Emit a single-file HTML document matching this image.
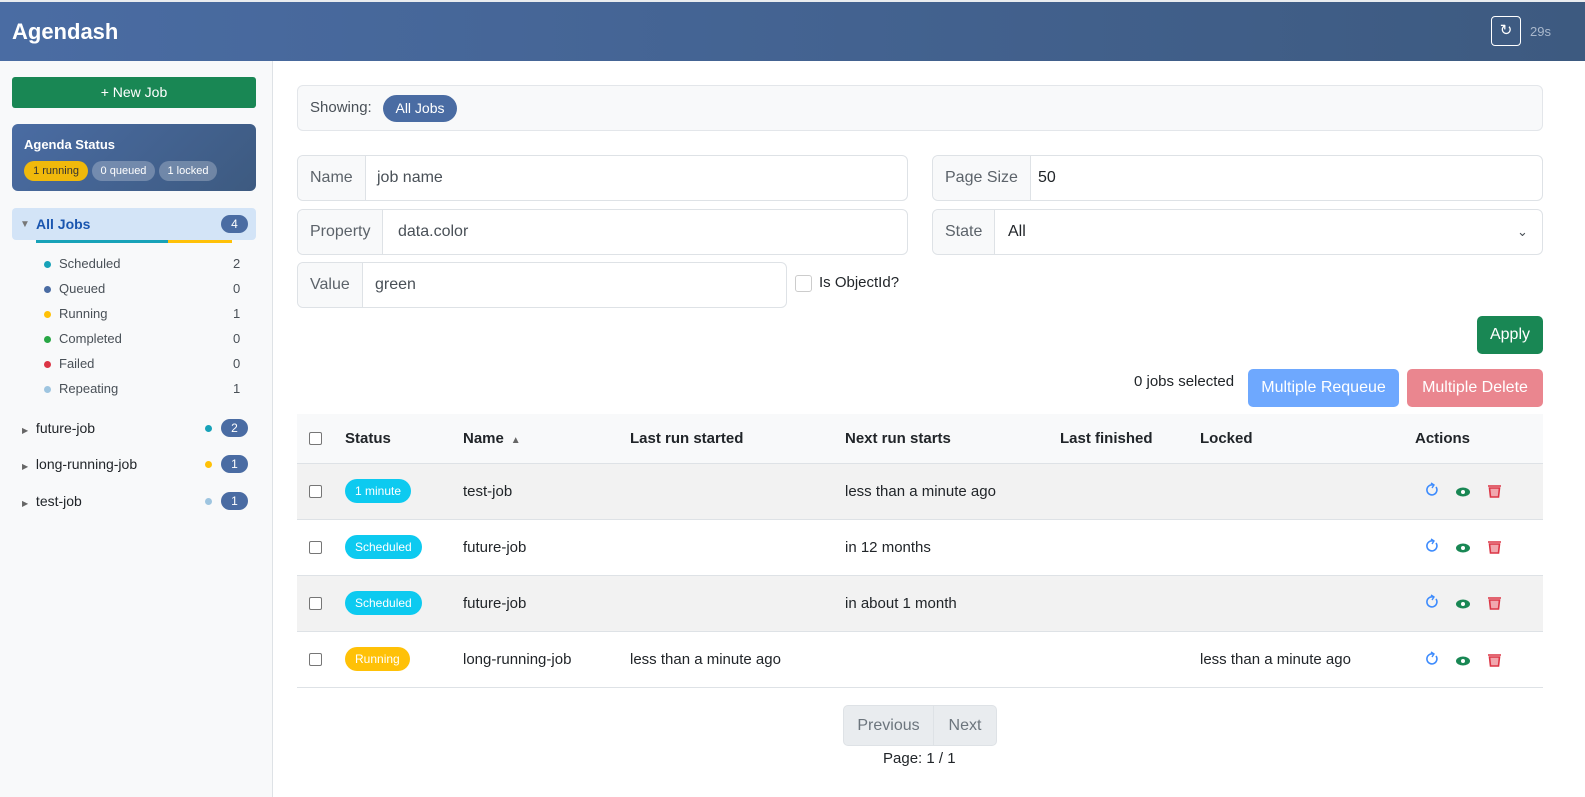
<!DOCTYPE html>
<html><head><meta charset="utf-8"><style>
*{box-sizing:border-box;margin:0;padding:0}
body{width:1585px;height:797px;overflow:hidden;font-family:"Liberation Sans",sans-serif;color:#212529;background:#fff;position:relative}
.hdr{position:absolute;left:0;top:2px;width:1585px;height:59px;background:linear-gradient(90deg,#4a6ca3,#3d5a80);border-top:0}
.top{position:absolute;left:0;top:0;width:1585px;height:2px;background:#e9ecef}
.hdr h1{position:absolute;left:12px;top:17px;color:#fff;font-size:22px;font-weight:bold}
.rb{position:absolute;left:1491px;top:14px;width:30px;height:30px;border:1px solid #fff;border-radius:4px;color:#fff;text-align:center;line-height:28px;font-size:15px}
.sec{position:absolute;left:1530px;top:22px;color:#aab8cc;font-size:13px}
.side{position:absolute;left:0;top:61px;width:273px;height:736px;background:#f8f9fa;border-right:1px solid #dee2e6}
.nj{position:absolute;left:12px;top:16px;width:244px;height:31px;background:#198754;border-radius:3px;color:#fff;text-align:center;line-height:31px;font-size:14px}
.as{position:absolute;left:12px;top:63px;width:244px;height:67px;border-radius:6px;background:linear-gradient(135deg,#4a6ca3,#3d5a80);color:#fff}
.as b{position:absolute;left:12px;top:13px;font-size:13px}
.pill{position:absolute;top:37px;height:20px;border-radius:10px;font-size:11px;line-height:20px;text-align:center;color:#fff;background:rgba(255,255,255,.25)}
.aj{position:absolute;left:12px;top:147px;width:244px;height:32px;background:#d3e4f7;border-radius:4px}
.aj span{position:absolute;left:24px;top:8px;color:#1a56b0;font-weight:bold;font-size:14px}
.cnt{position:absolute;height:18px;border-radius:9px;background:#4a6ca3;color:#fff;font-size:12px;line-height:18px;text-align:center;width:27px}
.sub{position:absolute;left:44px;font-size:13px;color:#495057}
.sub i{position:absolute;left:0;top:5px;width:7px;height:7px;border-radius:50%}
.sub span{position:absolute;left:15px;top:0;white-space:nowrap}
.sub em{position:absolute;left:189px;font-style:normal}
.jl{position:absolute;left:22px;font-size:14px;color:#212529}
.main{position:absolute;left:297px}
.show{position:absolute;left:297px;top:85px;width:1246px;height:46px;background:#f8f9fa;border:1px solid #e3e6ea;border-radius:6px;font-size:15px;color:#495057}
.ig{position:absolute;height:46px;border:1px solid #dee2e6;border-radius:6px;font-size:16px;background:#fff}
.ig .l{position:absolute;left:0;top:0;height:44px;background:#f8f9fa;border-right:1px solid #dee2e6;color:#5c636a;padding:0 12px;line-height:44px;border-radius:6px 0 0 6px}
.ig .v{position:absolute;top:0;line-height:44px;color:#495057}
.btn{position:absolute;height:38px;border-radius:5px;color:#fff;font-size:16px;line-height:38px;text-align:center}
table{position:absolute;left:297px;top:414px;width:1246px;border-collapse:collapse;font-size:15px}
th{text-align:left;height:49px;font-weight:bold;background:#f8f9fa;border-bottom:1px solid #dee2e6}
td{height:56px;border-bottom:1px solid #dee2e6}
tr.g td{background:#f2f2f2}
.cb{display:inline-block;width:13px;height:13px;border:1px solid #767676;border-radius:2px;background:#fff;vertical-align:middle}
.bd{display:inline-block;height:24px;border-radius:12px;font-size:12px;line-height:24px;padding:0 10px;color:#fff;background:#0dcaf0}
.pg{position:absolute;top:705px;height:41px;background:#e9ecef;border:1px solid #dee2e6;color:#6c757d;font-size:16px;line-height:39px;text-align:center}
</style></head><body>
<div class="top"></div>
<div class="hdr"><h1>Agendash</h1><div class="rb">↻</div><div class="sec">29s</div></div>
<div class="side">
<div class="nj">+ New Job</div>
<div class="as"><b>Agenda Status</b>
<div class="pill" style="left:12px;width:64px;background:#f0b90b;color:#333">1 running</div>
<div class="pill" style="left:80px;width:63px">0 queued</div>
<div class="pill" style="left:147px;width:58px">1 locked</div></div>
<div class="aj"><span style="left:8px;color:#777;font-size:10px;top:11px">▼</span><span>All Jobs</span><div class="cnt" style="left:209px;top:7px">4</div></div>
<div style="position:absolute;left:36px;top:179px;width:132px;height:3px;background:#17a2b8"></div>
<div style="position:absolute;left:168px;top:179px;width:64px;height:3px;background:#ffc107"></div>
<div class="sub" style="top:195px"><i style="background:#17a2b8"></i><span>Scheduled</span><em>2</em></div>
<div class="sub" style="top:220px"><i style="background:#4a6ca3"></i><span>Queued</span><em>0</em></div>
<div class="sub" style="top:245px"><i style="background:#ffc107"></i><span>Running</span><em>1</em></div>
<div class="sub" style="top:270px"><i style="background:#28a745"></i><span>Completed</span><em>0</em></div>
<div class="sub" style="top:295px"><i style="background:#dc3545"></i><span>Failed</span><em>0</em></div>
<div class="sub" style="top:320px"><i style="background:#9ec5e0"></i><span>Repeating</span><em>1</em></div>
<div class="jl" style="top:359px"><span style="font-size:8px;color:#666">▶</span>&nbsp; future-job</div>
<i style="position:absolute;left:205px;top:364px;width:7px;height:7px;border-radius:50%;background:#17a2b8"></i><div class="cnt" style="left:221px;top:358px">2</div>
<div class="jl" style="top:395px"><span style="font-size:8px;color:#666">▶</span>&nbsp; long-running-job</div>
<i style="position:absolute;left:205px;top:400px;width:7px;height:7px;border-radius:50%;background:#ffc107"></i><div class="cnt" style="left:221px;top:394px">1</div>
<div class="jl" style="top:432px"><span style="font-size:8px;color:#666">▶</span>&nbsp; test-job</div>
<i style="position:absolute;left:205px;top:437px;width:7px;height:7px;border-radius:50%;background:#9ec5e0"></i><div class="cnt" style="left:221px;top:431px">1</div>
</div>
<div class="show"><span style="position:absolute;left:12px;top:13px">Showing:</span><span style="position:absolute;left:85px;top:9px;height:27px;width:74px;border-radius:14px;background:#4a6ca3;color:#fff;font-size:14px;line-height:27px;text-align:center">All Jobs</span></div>
<div class="ig" style="left:297px;top:155px;width:611px"><div class="l">Name</div><div class="v" style="left:79px">job name</div></div>
<div class="ig" style="left:297px;top:209px;width:611px"><div class="l">Property</div><div class="v" style="left:100px">data.color</div></div>
<div class="ig" style="left:297px;top:262px;width:490px"><div class="l">Value</div><div class="v" style="left:77px">green</div></div>
<div style="position:absolute;left:795px;top:275px;width:17px;height:17px;border:1px solid #ccc;border-radius:3px"></div>
<div style="position:absolute;left:819px;top:274px;font-size:15px">Is ObjectId?</div>
<div class="ig" style="left:932px;top:155px;width:611px"><div class="l">Page Size</div><div class="v" style="left:105px;color:#212529">50</div></div>
<div class="ig" style="left:932px;top:209px;width:611px"><div class="l">State</div><div class="v" style="left:75px;color:#212529">All</div><div class="v" style="left:584px;font-size:13px">&#8964;</div></div>
<div class="btn" style="left:1477px;top:316px;width:66px;background:#198754">Apply</div>
<div style="position:absolute;left:1134px;top:373px;font-size:15px">0 jobs selected</div>
<div class="btn" style="left:1248px;top:369px;width:151px;background:#6ea8fe">Multiple Requeue</div>
<div class="btn" style="left:1407px;top:369px;width:136px;background:#ea868f">Multiple Delete</div>
<table>
<tr><th style="width:48px;padding-left:12px"><span class="cb"></span></th><th style="width:118px">Status</th><th style="width:167px">Name <span style="font-size:10px;color:#666">&nbsp;▲</span></th><th style="width:215px">Last run started</th><th style="width:215px">Next run starts</th><th style="width:140px">Last finished</th><th style="width:215px">Locked</th><th>Actions</th></tr>
<tr class="g"><td style="padding-left:12px"><span class="cb"></span></td><td><span class="bd">1 minute</span></td><td>test-job</td><td></td><td>less than a minute ago</td><td></td><td></td><td class="ac"></td></tr>
<tr><td style="padding-left:12px"><span class="cb"></span></td><td><span class="bd">Scheduled</span></td><td>future-job</td><td></td><td>in 12 months</td><td></td><td></td><td class="ac"></td></tr>
<tr class="g"><td style="padding-left:12px"><span class="cb"></span></td><td><span class="bd">Scheduled</span></td><td>future-job</td><td></td><td>in about 1 month</td><td></td><td></td><td class="ac"></td></tr>
<tr><td style="padding-left:12px"><span class="cb"></span></td><td><span class="bd" style="background:#ffc107">Running</span></td><td>long-running-job</td><td>less than a minute ago</td><td></td><td></td><td>less than a minute ago</td><td class="ac"></td></tr>
</table>
<svg style="position:absolute;left:0;top:0" width="1585" height="797">
<g id="ic">
<path d="M1436 487 a5 5 0 1 1 -3 -2" fill="none" stroke="#3d8bfd" stroke-width="1.6"/><path d="M1431 483 l3 2 -2 3" fill="none" stroke="#3d8bfd" stroke-width="1.4"/>
<ellipse cx="1463" cy="492" rx="7" ry="4.5" fill="#198754"/><circle cx="1463" cy="492" r="2" fill="#fff"/>
<path d="M1488 486 h13 M1489.5 488 h10 l-1 9 h-8z" stroke="#dc3545" stroke-width="1.6" fill="#f1a7ae"/>
</g>
<use href="#ic" y="56"/><use href="#ic" y="112"/><use href="#ic" y="169"/>
</svg>
<div class="pg" style="left:843px;width:91px;border-radius:5px 0 0 5px">Previous</div>
<div class="pg" style="left:933px;width:64px;border-radius:0 5px 5px 0">Next</div>
<div style="position:absolute;left:883px;top:750px;font-size:15px">Page: 1 / 1</div>
</body></html>
